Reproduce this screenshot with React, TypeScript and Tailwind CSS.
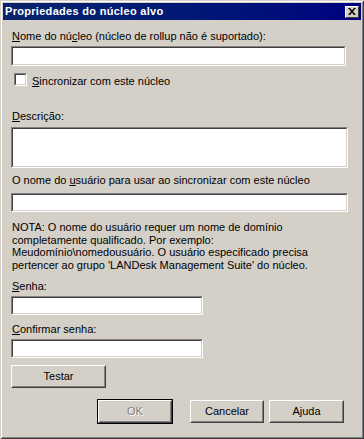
import React from "react";

function Edit({ className }: { className: string }) {
  return (
    <div className={`border border-t-[#808080] border-l-[#808080] border-b-white border-r-white ${className}`}>
      <div className="h-full border border-t-[#404040] border-l-[#404040] border-b-[#d4d0c8] border-r-[#d4d0c8] bg-white" />
    </div>
  );
}

function Btn({ className, children, disabled }: { className: string; children: React.ReactNode; disabled?: boolean }) {
  return (
    <div className={`border border-t-white border-l-white border-b-[#404040] border-r-[#404040] ${className}`}>
      <div
        className={`h-full flex items-center justify-center border border-t-[#d4d0c8] border-l-[#d4d0c8] border-b-[#808080] border-r-[#808080] ${
          disabled ? "text-[#808080] [text-shadow:1px_1px_0_#ffffff]" : "text-black"
        }`}
      >
        {children}
      </div>
    </div>
  );
}

export default function App() {
  return (
    <div className="w-[364px] h-[439px] bg-[#d4d0c8] p-[3px] font-['Liberation_Sans',Arial,sans-serif] text-[11px] leading-[13px] text-black shadow-[inset_1px_1px_0_#d4d0c8,inset_-1px_-1px_0_#404040,inset_2px_2px_0_#ffffff,inset_-2px_-2px_0_#808080] overflow-hidden">
      {/* Title bar */}
      <div className="h-[17px] flex items-center justify-between bg-gradient-to-r from-[#0a246a] to-[#000080] pl-[2px] pr-[2px]">
        <span className="text-white font-bold text-[11px] leading-[13px] tracking-[0.3px]">
          Propriedades do núcleo alvo
        </span>
        <div className="w-[14px] h-[12px] border border-t-white border-l-white border-b-[#404040] border-r-[#404040] bg-[#d4d0c8] flex items-center justify-center">
          <svg width="8" height="7" viewBox="0 0 8 7">
            <path d="M0 0h2l2 2.2L6 0h2L5 3.5 8 7H6L4 4.8 2 7H0l3-3.5z" fill="#000" />
          </svg>
        </div>
      </div>

      {/* Body */}
      <div className="flex flex-col pl-[8px]">
        <div className="mt-[10px] ml-[1px] h-[13px] whitespace-nowrap">
          <u>N</u>ome do nú<u>c</u>leo (núcleo de rollup não é suportado):
        </div>
        <Edit className="mt-[3px] w-[335px] h-[20px]" />

        <div className="mt-[7px] ml-[3px] flex items-start">
          <Edit className="w-[13px] h-[13px]" />
          <span className="ml-[5px] mt-[2px] whitespace-nowrap">
            <u>S</u>incronizar com este núcleo
          </span>
        </div>

        <div className="mt-[22px] ml-[1px] h-[13px]">
          <u>D</u>escrição:
        </div>
        <Edit className="mt-[4px] w-[337px] h-[41px]" />

        <div className="mt-[6px] ml-[1px] h-[13px] whitespace-nowrap">
          O nome do <u>u</u>suário para usar ao sincronizar com este núcleo
        </div>
        <Edit className="mt-[6px] w-[337px] h-[19px]" />

        <div className="mt-[9px] ml-[1px] leading-[12.5px] whitespace-nowrap">
          <div>NOTA: O nome do usuário requer um nome de domínio</div>
          <div>completamente qualificado. Por exemplo:</div>
          <div>Meudomínio\nomedousuário. O usuário especificado precisa</div>
          <div>pertencer ao grupo 'LANDesk Management Suite' do núcleo.</div>
        </div>

        <div className="mt-[9px] ml-[1px] h-[13px]">
          <u>S</u>enha:
        </div>
        <Edit className="mt-[3px] w-[192px] h-[19px]" />

        <div className="mt-[8px] ml-[1px] h-[13px]">
          <u>C</u>onfirmar senha:
        </div>
        <Edit className="mt-[3px] w-[192px] h-[19px]" />

        <Btn className="mt-[7px] w-[95px] h-[23px]">Testar</Btn>

        <div className="mt-[11px] flex items-start">
          <div className="ml-[86px] border border-black w-[76px] h-[25px]">
            <Btn className="w-full h-full" disabled>
              OK
            </Btn>
          </div>
          <Btn className="ml-[17px] mt-[1px] w-[74px] h-[23px]">Cancelar</Btn>
          <Btn className="ml-[5px] mt-[1px] w-[75px] h-[23px]">Ajuda</Btn>
        </div>
      </div>
    </div>
  );
}
